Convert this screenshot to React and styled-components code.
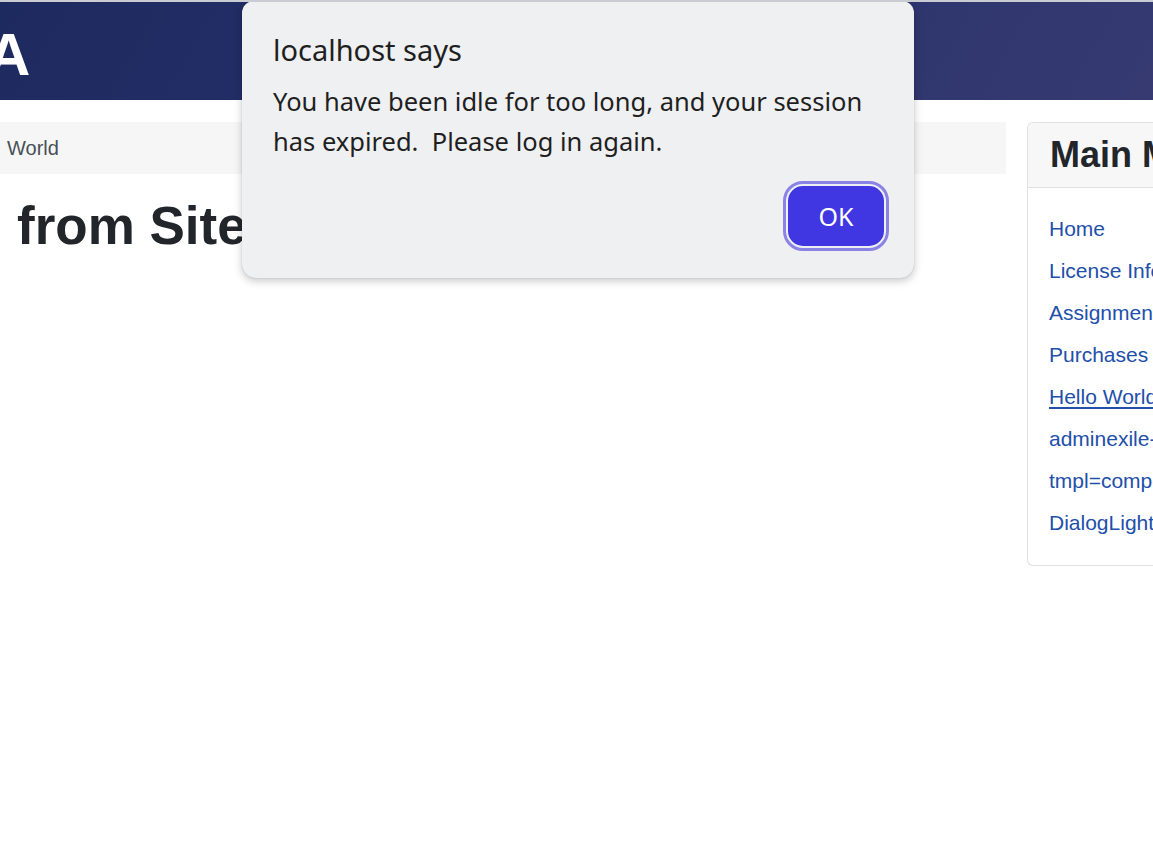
import React from 'react';
import styled, { createGlobalStyle } from 'styled-components';

const GlobalStyle = createGlobalStyle`
	html, body {
		margin: 0;
		padding: 0;
		background: #fff;
		overflow: hidden;
	}
	body {
		font-family: "Liberation Sans", Arial, sans-serif;
		color: #22262a;
	}
`;

export const Page = styled.div`
	position: relative;
	width: 1153px;
	height: 868px;
	overflow: hidden;
	border-top: 2px solid #c9ccd3;
	box-sizing: border-box;
`;

export const Header = styled.header`
	height: 98px;
	display: flex;
	align-items: center;
	background: linear-gradient(120deg, #1d2a5f 0%, #26306a 45%, #363a71 100%);
	overflow: hidden;
`;

export const Brand = styled.span`
	margin-left: -13px;
	margin-top: 8px;
	font-size: 60px;
	font-weight: 700;
	color: #fff;
	line-height: 1;
`;

export const Body = styled.div`
	display: grid;
	grid-template-columns: 1006px 1fr;
	column-gap: 21px;
	padding-top: 22px;
`;

export const Main = styled.main`
	display: flex;
	flex-direction: column;
`;

export const Breadcrumb = styled.nav`
	height: 52px;
	display: flex;
	align-items: center;
	padding-left: 7px;
	background: #f6f6f6;
	font-size: 20px;
	color: #495057;
`;

export const Title = styled.h1`
	margin: 20px 0 0 17px;
	font-size: 53px;
	font-weight: 700;
	line-height: 1.2;
	color: #22262a;
`;

export const Card = styled.aside`
	width: 160px;
	height: 444px;
	border: 1px solid #dfe1e3;
	border-right: none;
	border-radius: 6px 0 0 6px;
	box-sizing: border-box;
	display: flex;
	flex-direction: column;
`;

export const CardHead = styled.h3`
	margin: 0;
	height: 64px;
	display: flex;
	align-items: center;
	padding-left: 22px;
	background: #f7f7f7;
	border-bottom: 1px solid #dfe1e3;
	border-radius: 6px 0 0 0;
	font-size: 36px;
	font-weight: 700;
	color: #22262a;
	white-space: nowrap;
`;

export const MenuList = styled.ul`
	list-style: none;
	margin: 0;
	padding: 29px 0 0 21px;
	display: flex;
	flex-direction: column;
	gap: 18px;
`;

export const MenuLink = styled.a`
	display: block;
	font-size: 21px;
	line-height: 24px;
	color: #224faa;
	text-decoration: ${(p) => (p.$active ? 'underline' : 'none')};
	text-underline-offset: 3px;
	white-space: nowrap;
`;

export const Dialog = styled.div`
	position: absolute;
	left: 242px;
	top: -1px;
	width: 672px;
	height: 277px;
	box-sizing: border-box;
	padding: 30px 30px 0 31px;
	background: #eff0f2;
	border-radius: 12px 12px 14px 14px;
	box-shadow: 0 3px 8px rgba(0, 0, 0, 0.22), 0 0 1px rgba(0, 0, 0, 0.25);
	font-family: "Noto Sans", "Open Sans", sans-serif;
	color: #1f1f1f;
	display: flex;
	flex-direction: column;
`;

export const DialogTitle = styled.div`
	font-size: 29px;
	line-height: 38px;
`;

export const DialogText = styled.div`
	margin-top: 12px;
	font-size: 25.5px;
	line-height: 40px;
	white-space: pre-wrap;
`;

export const Actions = styled.div`
	display: flex;
	justify-content: flex-end;
	margin-top: 25px;
`;

export const OkButton = styled.button`
	width: 96px;
	height: 60px;
	border: none;
	border-radius: 15px;
	background: #4036e2;
	color: #fff;
	font-family: "Noto Sans", "Open Sans", sans-serif;
	font-size: 25px;
	outline: 3px solid #8a83e6;
	outline-offset: 2px;
	box-sizing: border-box;
`;

const menu = [
	'Home',
	'License Info',
	'Assignments',
	'Purchases',
	'Hello World',
	'adminexile-test',
	'tmpl=component',
	'DialogLightbox',
];

function App() {
	return (
		<>
			<GlobalStyle />
			<Page>
				<Header>
					<Brand>A</Brand>
				</Header>
				<Body>
					<Main>
						<Breadcrumb>World</Breadcrumb>
						<Title>from Site</Title>
					</Main>
					<Card>
						<CardHead>Main Menu</CardHead>
						<MenuList>
							{menu.map((m) => (
								<li key={m}>
									<MenuLink href="#" $active={m === 'Hello World'}>
										{m}
									</MenuLink>
								</li>
							))}
						</MenuList>
					</Card>
				</Body>
				<Dialog role="alertdialog">
					<DialogTitle>localhost says</DialogTitle>
					<DialogText>{'You have been idle for too long, and your session\nhas expired.  Please log in again.'}</DialogText>
					<Actions>
						<OkButton>OK</OkButton>
					</Actions>
				</Dialog>
			</Page>
		</>
	);
}

export default App;
